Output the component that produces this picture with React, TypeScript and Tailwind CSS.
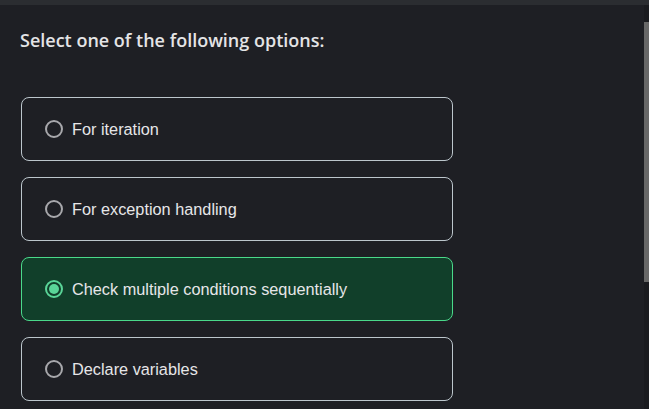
import React from "react"

const options = [
  { id: "a", label: "For iteration" },
  { id: "b", label: "For exception handling" },
  { id: "c", label: "Check multiple conditions sequentially" },
  { id: "d", label: "Declare variables" },
]

export default function App() {
  const selected = "c"

  return (
    <div className="w-[649px] h-[409px] overflow-hidden bg-[#1e1f24] flex flex-col">
      {/* top strip */}
      <div className="h-[5px] bg-[#2b2d31] shrink-0" />

      <div className="flex flex-1 min-h-0">
        {/* Main content */}
        <main className="flex-1 pl-[20px] pt-[22px]">
          <h2 className="font-['Open_Sans',sans-serif] font-semibold text-[18px] leading-[26px] text-[#e4e4e6]">
            Select one of the following options:
          </h2>

          <div className="mt-[44px] ml-[1px] flex flex-col gap-4 w-[432px]">
            {options.map((opt) => {
              const isActive = opt.id === selected
              return (
                <label
                  key={opt.id}
                  className={`
                    h-[64px] flex items-center pl-[23px] rounded-lg border
                    ${isActive ? "bg-[#113f2a] border-[#4ad98a]" : "bg-[#1e1f24] border-[#bcc6cc]"}
                  `}
                >
                  <span
                    className={`
                      w-[18px] h-[18px] rounded-full border-2 flex items-center justify-center shrink-0
                      ${isActive ? "border-[#5ad598]" : "border-[#a8a8ac]"}
                    `}
                  >
                    {isActive && <span className="w-[10px] h-[10px] rounded-full bg-[#5ad598]" />}
                  </span>
                  <span className="ml-[9px] font-['Liberation_Sans',Arial,sans-serif] text-[16.3px] text-[#e6e6e8]">
                    {opt.label}
                  </span>
                </label>
              )
            })}
          </div>
        </main>

        {/* Scrollbar */}
        <div className="w-[5px] bg-[#1a1b1f] flex flex-col pt-[17px]">
          <div className="h-[260px] bg-[#686868]" />
        </div>
      </div>
    </div>
  )
}
